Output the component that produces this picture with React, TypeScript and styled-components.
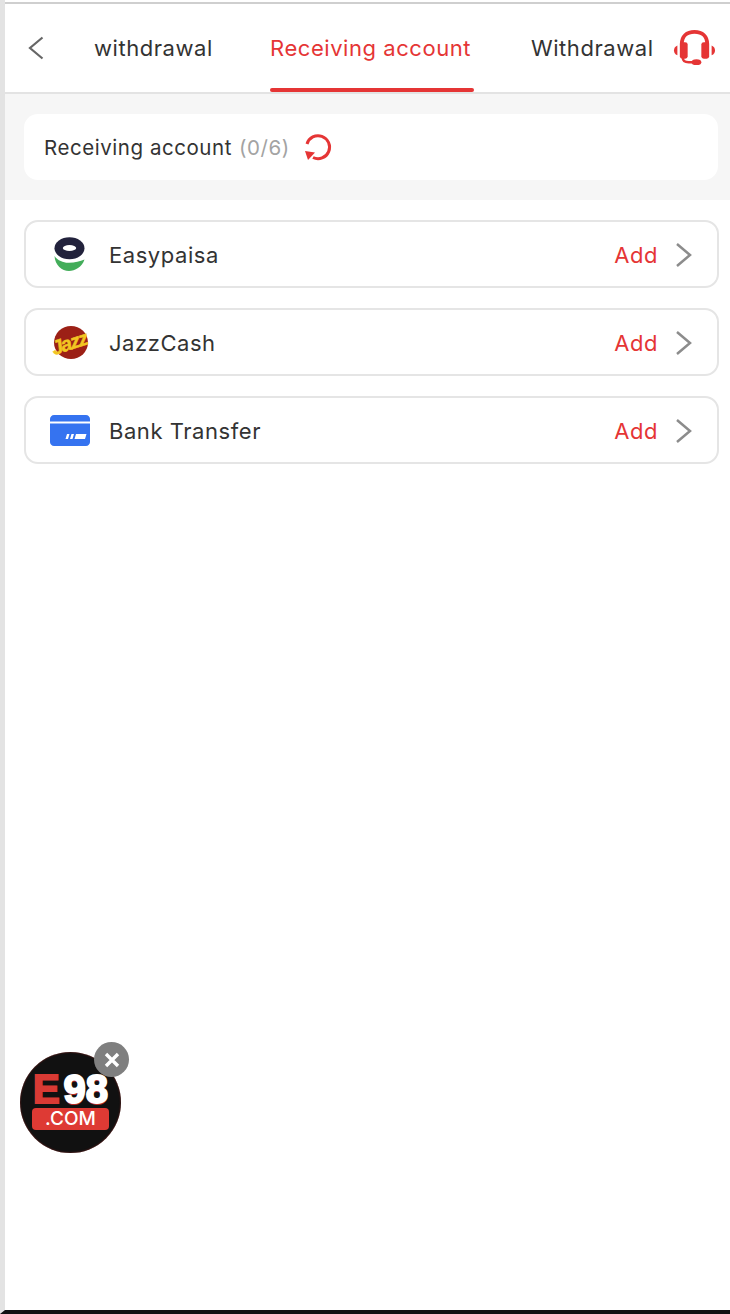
import React from "react";
import styled, { createGlobalStyle } from "styled-components";

const GlobalStyle = createGlobalStyle`
  html, body {
    margin: 0;
    padding: 0;
    background: #fff;
  }
  * {
    box-sizing: border-box;
  }
`;

const RED = "#e53535";

const Page = styled.div`
  position: relative;
  display: flex;
  flex-direction: column;
  width: 730px;
  height: 1314px;
  overflow: hidden;
  padding-top: 2px;
  border-left: 5px solid #e3e3e3;
  border-bottom: 4px solid #111;
  font-family: Inter, "Liberation Sans", sans-serif;
  color: #333;
`;

const Header = styled.header`
  display: flex;
  align-items: stretch;
  height: 92px;
  border-top: 2px solid #cfcfcf;
  border-bottom: 2px solid #e3e3e3;
  background: #fff;
`;

const BackButton = styled.div`
  display: flex;
  align-items: center;
  width: 89px;
  padding-left: 23px;
  color: #666;
`;

const Tabs = styled.nav`
  display: flex;
  width: 559px;
  overflow: hidden;
`;

const Tab = styled.div<{ $active?: boolean; $width: number }>`
  position: relative;
  display: flex;
  flex: none;
  align-items: center;
  width: ${(p) => p.$width}px;
  height: 100%;
  padding-bottom: 1px;
  font-size: 22px;
  letter-spacing: 0.55px;
  white-space: nowrap;
  color: ${(p) => (p.$active ? RED : "#333")};

  &::after {
    content: "";
    display: ${(p) => (p.$active ? "block" : "none")};
    position: absolute;
    left: 0;
    bottom: 0;
    width: 204px;
    height: 4px;
    border-radius: 2px;
    background: ${RED};
  }
`;

const Support = styled.div`
  display: flex;
  align-items: center;
  padding-left: 20px;
  padding-bottom: 1px;
`;

const InfoArea = styled.section`
  height: 106px;
  padding: 20px 12px 20px 19px;
  background: #f6f6f6;
`;

const InfoCard = styled.div`
  display: flex;
  align-items: center;
  height: 66px;
  padding-left: 20px;
  padding-top: 1px;
  border-radius: 14px;
  background: #fff;
  font-size: 20.5px;
  letter-spacing: 0.55px;
`;

const Count = styled.span`
  margin-left: 7px;
  color: #a3a3a3;
`;

const Refresh = styled.span`
  display: flex;
  margin-left: 13px;
`;

const Sheet = styled.main`
  flex: 1;
  display: flex;
  flex-direction: column;
  gap: 20px;
  padding: 20px 11px 0 19px;
  border-radius: 14px 14px 0 0;
  background: #fff;
`;

const Row = styled.div`
  display: flex;
  align-items: center;
  height: 68px;
  padding: 1px 24px 0 22px;
  border: 2px solid #e5e5e5;
  border-radius: 14px;
`;

const RowIcon = styled.span`
  display: flex;
  flex: none;
  align-items: center;
  justify-content: center;
  width: 44px;
  height: 44px;
`;

const RowName = styled.span`
  flex: 1;
  margin-left: 17px;
  font-size: 22px;
  letter-spacing: 0.55px;
`;

const RowAction = styled.span`
  margin-right: 17px;
  font-size: 22px;
  letter-spacing: 0.55px;
  color: ${RED};
`;

const Chevron = styled.span`
  display: flex;
  color: #8c8c8c;
`;

const JazzBadge = styled.span`
  position: relative;
  display: block;
  width: 40px;
  height: 34px;
`;

const JazzDisc = styled.span`
  position: absolute;
  left: 4px;
  top: 0;
  width: 34px;
  height: 33px;
  border-radius: 50%;
  background: #9c2016;
`;

const JazzWord = styled.span`
  position: absolute;
  left: 1px;
  top: 7px;
  font-family: "Liberation Sans", sans-serif;
  font-size: 20px;
  font-weight: 700;
  font-style: italic;
  line-height: 20px;
  letter-spacing: -1.6px;
  color: #f2c522;
  -webkit-text-stroke: 0.5px #f2c522;
  transform: rotate(-18deg);
`;

const Promo = styled.div`
  position: absolute;
  left: 15px;
  top: 1052px;
  width: 101px;
  height: 101px;
  border-radius: 50%;
  background: #111;
  box-shadow: inset 0 0 2px #7a1f1b;
`;

const PromoNumber = styled.div`
  display: flex;
  justify-content: center;
  align-items: baseline;
  height: 55px;
  padding-top: 20px;
  font-family: "Liberation Sans", sans-serif;
  font-size: 40px;
  font-weight: 700;
  line-height: 35px;
  color: #fff;
  -webkit-text-stroke: 2px #fff;
  text-shadow: 0 2px 0 #b52a26;
`;

const PromoE = styled.span`
  margin-right: 4px;
  color: #d93a34;
  -webkit-text-stroke: 2px #d93a34;
  text-shadow: none;
`;

const PromoDomain = styled.div`
  margin: 1px auto 0;
  width: 77px;
  height: 22px;
  border-radius: 4px;
  background: #de3a34;
  color: #fff;
  font-size: 19px;
  font-weight: 500;
  line-height: 22px;
  text-align: center;
`;

const PromoClose = styled.div`
  position: absolute;
  left: 74px;
  top: -10px;
  display: flex;
  align-items: center;
  justify-content: center;
  width: 35px;
  height: 35px;
  border-radius: 50%;
  background: #7f7f7f;
`;

const Headset = () => (
  <svg width="43" height="38" viewBox="0 0 44 38" fill="none">
    <path d="M9 15C9 7 14 2.500 22 2.500S35 7 35 15" stroke={RED} strokeWidth="4" />
    <rect x="7" y="13" width="8" height="17" rx="2.500" fill={RED} />
    <rect x="29" y="13" width="8" height="17" rx="2.500" fill={RED} />
    <path d="M4.500 16.500V26.500C2 25.500 1 23.500 1 21.500S2 17.500 4.500 16.500Z" fill={RED} />
    <path d="M39.500 16.500V26.500C42 25.500 43 23.500 43 21.500S42 17.500 39.500 16.500Z" fill={RED} />
    <path d="M10 29C10 32 12 33.500 16 33.500H20" stroke={RED} strokeWidth="2.500" />
    <ellipse cx="24" cy="33.500" rx="5" ry="3" fill={RED} />
  </svg>
);

const RefreshIcon = () => (
  <svg width="30" height="30" viewBox="0 0 30 30" fill="none">
    <path d="M4 11A11.500 11.500 0 1 1 10 24.500" stroke={RED} strokeWidth="3" />
    <path d="M2 18L12 19.500L5 27Z" fill={RED} />
  </svg>
);

const EasypaisaIcon = () => (
  <svg width="32" height="36" viewBox="0 0 32 36" fill="none">
    <ellipse cx="15.500" cy="11.300" rx="15" ry="11" fill="#22223c" />
    <ellipse cx="15.500" cy="11" rx="6.700" ry="3" fill="#fff" />
    <path
      d="M0.500 19C4 24 10 26 15 25.700C21 25.500 26 24.500 30.500 22.500C28 30 21 34 15 34C8 34 1 28 0.500 19Z"
      fill="#43ad5a"
    />
  </svg>
);

const BankIcon = () => (
  <svg width="40" height="31" viewBox="0 0 40 31" fill="none">
    <path d="M0 4C0 1.800 1.800 0 4 0H36C38.200 0 40 1.800 40 4V6.500H0Z" fill="#3573f0" />
    <path d="M0 8.500H40V27C40 29.200 38.200 31 36 31H4C1.800 31 0 29.200 0 27Z" fill="#3573f0" />
    <path d="M17 19H19.500L18 24H15.500ZM21.500 19H24L22.500 24H20ZM26 19H36.500L35 24H24.500Z" fill="#fff" />
  </svg>
);

const ChevronRight = () => (
  <svg width="18" height="26" viewBox="0 0 18 26" fill="none">
    <path d="M2 2L15 13L2 24" stroke="currentColor" strokeWidth="2.500" />
  </svg>
);

const accounts = [
  { name: "Easypaisa", icon: <EasypaisaIcon /> },
  {
    name: "JazzCash",
    icon: (
      <JazzBadge>
        <JazzDisc />
        <JazzWord>Jazz</JazzWord>
      </JazzBadge>
    ),
  },
  { name: "Bank Transfer", icon: <BankIcon /> },
];

export default function App() {
  return (
    <>
      <GlobalStyle />
      <Page>
        <Header>
          <BackButton>
            <svg width="16" height="24" viewBox="0 0 16 24" fill="none">
              <path d="M14.500 1.500L2 12L14.500 22.500" stroke="currentColor" strokeWidth="2.200" />
            </svg>
          </BackButton>
          <Tabs>
            <Tab $width={176}>withdrawal</Tab>
            <Tab $width={261} $active>
              Receiving account
            </Tab>
            <Tab $width={122}>Withdrawal</Tab>
          </Tabs>
          <Support>
            <Headset />
          </Support>
        </Header>
        <InfoArea>
          <InfoCard>
            Receiving account<Count>(0/6)</Count>
            <Refresh>
              <RefreshIcon />
            </Refresh>
          </InfoCard>
        </InfoArea>
        <Sheet>
          {accounts.map((a) => (
            <Row key={a.name}>
              <RowIcon>{a.icon}</RowIcon>
              <RowName>{a.name}</RowName>
              <RowAction>Add</RowAction>
              <Chevron>
                <ChevronRight />
              </Chevron>
            </Row>
          ))}
        </Sheet>
        <Promo>
          <PromoNumber>
            <PromoE>E</PromoE>98
          </PromoNumber>
          <PromoDomain>.COM</PromoDomain>
          <PromoClose>
            <svg width="18" height="18" viewBox="0 0 18 18" fill="none">
              <path d="M3 3L15 15M15 3L3 15" stroke="#fff" strokeWidth="3.400" />
            </svg>
          </PromoClose>
        </Promo>
      </Page>
    </>
  );
}
